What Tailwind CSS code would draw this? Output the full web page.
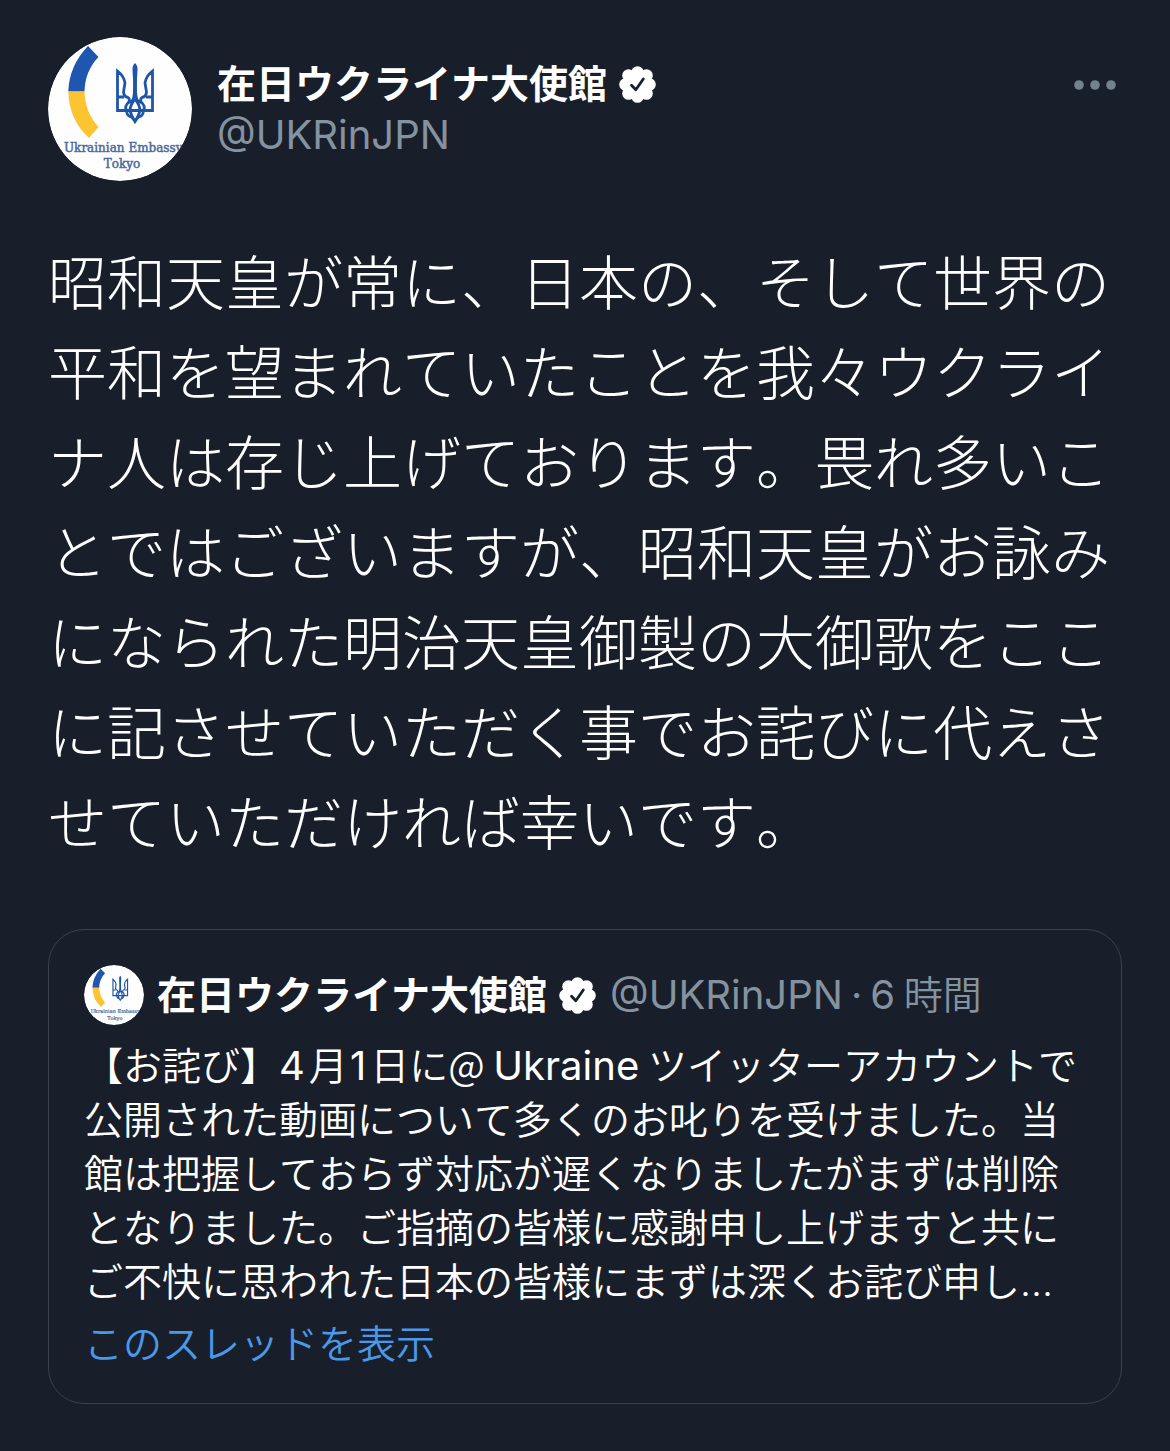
<!DOCTYPE html>
<html lang="ja">
<head>
<meta charset="utf-8">
<meta name="viewport" content="width=device-width, initial-scale=1">
<title>在日ウクライナ大使館</title>
<script src="https://cdn.jsdelivr.net/npm/@tailwindcss/browser@4"></script>
</head>
<body class="min-h-screen bg-[#191f2a] font-['Inter','Noto_Sans_CJK_JP',sans-serif] text-white [font-kerning:none]">
<svg class="hidden" aria-hidden="true">
  <symbol id="avatar" viewBox="0 0 144 144">
    <circle cx="72" cy="72" r="72" fill="#fefefe"/>
    <path d="M40 9 50.500 20Q37 34 36.500 54.500H20.300Q21 29 40 9Z" fill="#1f56b0"/>
    <path d="M20.300 54.500H36.500Q37 75 50.500 90L41 101Q21 83 20.300 54.500Z" fill="#fcc433"/>
    <g fill="none" stroke="#1f56a8" stroke-width="2.800" stroke-linejoin="miter">
      <path d="M69.500 73.500V34Q76 39 77 46L75.500 55Q76 60 80 60.500Q82 61.500 81 65Q86.500 66 86.500 52L87 30L87.500 52Q87.500 66 93 65Q92 61.500 94 60.500Q98 60 98.500 55L97 46Q98 39 104.500 34V73.500H69.500Z"/>
      <path d="M69.500 60H76M98 60H104.500M78.500 73.500Q79 79.500 83.500 80Q85.500 82 87 84.500Q88.500 82 90.500 80Q95 79.500 95.500 73.500M87 62Q82 68 82 74Q84 80 87 84.500Q90 80 92 74Q92 68 87 62M81 65Q76 69 78.500 73.500M93 65Q98 69 95.500 73.500"/>
    </g>
    <path d="M87 26Q84 29 84.500 33L86 60H88L89.500 33Q90 29 87 26Z" fill="#1f56a8"/>
    <g fill="#4a6c9d" stroke="#4a6c9d" stroke-width=".5" font-family="DejaVu Serif, serif" font-size="12">
      <text x="16" y="115">Ukrainian Embassy</text>
      <text x="74" y="131" text-anchor="middle">Tokyo</text>
    </g>
  </symbol>
  <symbol id="verified" viewBox="0 0 37 37">
    <g fill="#fff">
      <circle cx="18.500" cy="18.500" r="14.500"/>
      <circle cx="18.500" cy="6.500" r="6.300"/><circle cx="27.500" cy="9.500" r="6.300"/>
      <circle cx="30.500" cy="18.500" r="6.300"/><circle cx="27.500" cy="27.500" r="6.300"/>
      <circle cx="18.500" cy="30.500" r="6.300"/><circle cx="9.500" cy="27.500" r="6.300"/>
      <circle cx="6.500" cy="18.500" r="6.300"/><circle cx="9.500" cy="9.500" r="6.300"/>
    </g>
    <path d="M12.500 19.200 16.800 23.700 24.300 13" fill="none" stroke="#191f2a" stroke-width="2.800" stroke-linecap="round" stroke-linejoin="round"/>
  </symbol>
</svg>
<main class="px-12 pt-[37px] pb-12">
  <article>
    <header class="flex items-start">
      <svg class="size-36 shrink-0 overflow-hidden rounded-full" role="img" aria-label="Ukrainian Embassy Tokyo"><use href="#avatar"/></svg>
      <div class="ml-[25px] grow pt-[21px]">
        <div class="flex items-center gap-3">
          <h1 class="text-[39px] leading-[52px] font-bold whitespace-nowrap">在日ウクライナ大使館</h1>
          <svg class="size-[37px] shrink-0" role="img" aria-label="認証済み"><use href="#verified"/></svg>
        </div>
        <p class="text-[40px] leading-[50px] text-[#8592a0]">@UKRinJPN</p>
      </div>
      <button type="button" aria-label="その他" class="mt-[42px] mr-1.5 text-[#74818e]">
        <svg class="h-3 w-[42px]" viewBox="0 0 42 12" fill="currentColor"><circle cx="5" cy="6" r="4.800"/><circle cx="21" cy="6" r="4.800"/><circle cx="37" cy="6" r="4.800"/></svg>
      </button>
    </header>
    <p class="mt-[58px] text-[59px] leading-[90px] font-light">昭和天皇が常に、日本の、そして世界の<br>平和を望まれていたことを我々ウクライ<br>ナ人は存じ上げております。畏れ多いこ<br>とではございますが、昭和天皇がお詠み<br>になられた明治天皇御製の大御歌をここ<br>に記させていただく事でお詫びに代えさ<br>せていただければ幸いです。</p>
    <section class="mt-[60px] rounded-[36px] border border-[#38414c] px-[35px] pt-[35px] pb-8">
      <header class="flex items-center whitespace-nowrap">
        <svg class="size-[60px] shrink-0 overflow-hidden rounded-full" role="img" aria-label="Ukrainian Embassy Tokyo"><use href="#avatar"/></svg>
        <h2 class="ml-[13px] text-[39px] leading-[52px] font-bold">在日ウクライナ大使館</h2>
        <svg class="ml-3 size-[37px] shrink-0" role="img" aria-label="認証済み"><use href="#verified"/></svg>
        <p class="ml-3.5 text-[39px] leading-[52px] font-[350] text-[#8592a0]"><span class="text-[40px] leading-none font-normal">@UKRinJPN</span><span class="mx-2 font-normal">·</span><span class="text-[40px] leading-none font-normal">6</span><span class="font-['Noto_Sans_CJK_JP',sans-serif] leading-none"> 時間</span></p>
      </header>
      <p class="mt-3.5 text-[39px] leading-[54px] font-[350] whitespace-nowrap">【お詫び】<span class="mr-1 text-[40px] leading-none font-normal">4</span>月<span class="mr-1 ml-0.5 text-[40px] leading-none font-normal">1</span>日に<span class="font-['Noto_Sans_CJK_JP',sans-serif] leading-none">@ </span><span class="text-[40px] leading-none font-normal">Ukraine</span><span class="font-['Noto_Sans_CJK_JP',sans-serif] leading-none"> ツイッターアカウントで</span><br>公開された動画について多くのお叱りを受けました。当<br>館は把握しておらず対応が遅くなりましたがまずは削除<br>となりました。ご指摘の皆様に感謝申し上げますと共に<br>ご不快に思われた日本の皆様にまずは深くお詫び申し...</p>
      <a href="#" class="mt-2 block text-[39px] leading-[54px] font-[350] text-[#4a99e9]">このスレッドを表示</a>
    </section>
  </article>
</main>
</body>
</html>
